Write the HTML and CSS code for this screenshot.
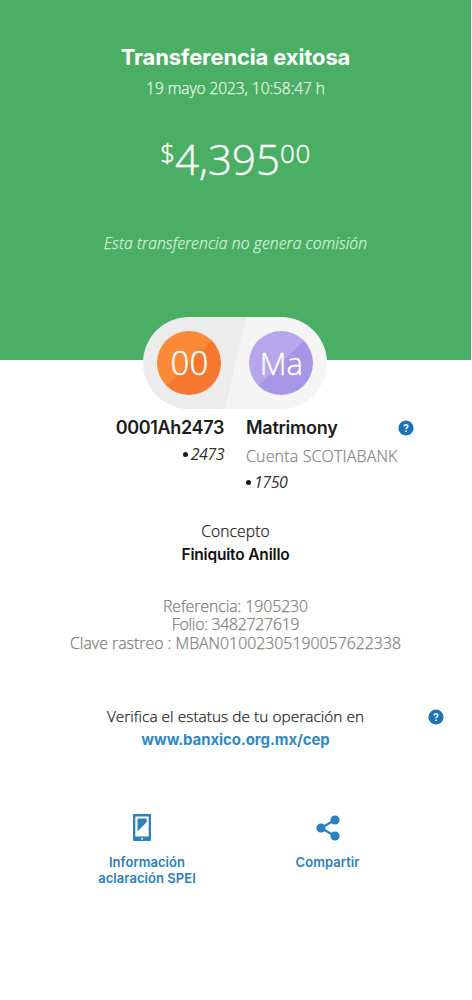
FILE: index.html
```html
<!DOCTYPE html>
<html lang="es">
<head>
<meta charset="utf-8">
<title>Transferencia exitosa</title>
<link rel="stylesheet" href="styles.css">
</head>
<body>
<main class="receipt">
  <header class="hero">
    <h1 class="title">Transferencia exitosa</h1>
    <p class="date">19 mayo 2023, 10:58:47 h</p>
    <p class="amount"><span class="currency">$</span><span class="units">4,395</span><span class="cents">00</span></p>
    <p class="fee">Esta transferencia no genera comisión</p>
  </header>

  <section class="pill">
    <div class="avatar avatar-from"><span>00</span></div>
    <div class="avatar avatar-to"><span>Ma</span></div>
  </section>

  <section class="parties">
    <div class="party party-from">
      <h2 class="name name-from">0001Ah2473</h2>
      <p class="account"><i class="dot"></i>2473</p>
    </div>
    <div class="party party-to">
      <h2 class="name name-to">Matrimony</h2>
      <p class="bank">Cuenta SCOTIABANK</p>
      <p class="account"><i class="dot"></i>1750</p>
    </div>
    <svg class="help" viewBox="0 0 16 16"><circle cx="8" cy="8" r="7.6" fill="#1c72b4"/><path d="M6.2 6.4C6.2 4.1 9.9 4.1 9.9 6.3C9.9 7.7 8.1 7.6 8.1 9.2M8.1 10.4v1.5" fill="none" stroke="#fff" stroke-width="1.5"/></svg>
  </section>

  <section class="concept">
    <p class="concept-label">Concepto</p>
    <p class="concept-value">Finiquito Anillo</p>
  </section>

  <section class="details">
    <p class="reference">Referencia: 1905230</p>
    <p class="folio">Folio: 3482727619</p>
    <p class="tracking">Clave rastreo : MBAN01002305190057622338</p>
  </section>

  <section class="verify">
    <div class="verify-text">
      <p class="verify-label">Verifica el estatus de tu operación en</p>
      <a class="verify-link">www.banxico.org.mx/cep</a>
    </div>
    <svg class="help" viewBox="0 0 16 16"><circle cx="8" cy="8" r="7.6" fill="#1c72b4"/><path d="M6.2 6.4C6.2 4.1 9.9 4.1 9.9 6.3C9.9 7.7 8.1 7.6 8.1 9.2M8.1 10.4v1.5" fill="none" stroke="#fff" stroke-width="1.5"/></svg>
  </section>

  <nav class="actions">
    <div class="action action-info">
      <svg class="phone" viewBox="0 0 18 27"><path fill="#2b80be" fill-rule="evenodd" d="M1 0h16Q18 0 18 1v25Q18 27 17 27H1Q0 27 0 26V1Q0 0 1 0ZM2.3 2.5v20h13.4v-20Z"/><path fill="#2b80be" d="M4.5 4.500H13.700V8L4.500 17.500Z"/><circle cx="9" cy="24.800" r="1" fill="#fff"/></svg>
      <span class="action-label">Información<br>aclaración SPEI</span>
    </div>
    <div class="action action-share">
      <svg class="share" viewBox="0 0 24 26"><path d="M19 5L5 13L19 21" fill="none" stroke="#2b80be" stroke-width="2.300"/><g fill="#2b80be"><circle cx="19" cy="5" r="4.600"/><circle cx="5" cy="13" r="4.600"/><circle cx="19" cy="21" r="4.600"/></g></svg>
      <span class="action-label">Compartir</span>
    </div>
  </nav>
</main>
</body>
</html>
```
FILE: styles.css
```css
* { box-sizing: border-box; }
body { margin: 0; background: #fff; }
h1, h2, p { margin: 0; }

.receipt {
  width: 471px;
  min-height: 1000px;
  font-family: "Open Sans", "Noto Sans", sans-serif;
  font-weight: 300;
  font-size: 16px;
  text-align: center;
  color: #222;
  white-space: nowrap;
}
.date, .fee, .bank, .concept-label, .details, .verify-label { -webkit-text-stroke: 0.25px currentColor; }
.amount, .avatar { -webkit-text-stroke: 0.45px currentColor; }

/* Green header */
.hero { height: 360px; padding-top: 42px; background: #4aaf64; color: #fff; }
.title { font: 700 22px/30px "Inter", sans-serif; letter-spacing: -0.13px; }
.date { margin-top: 5px; font-size: 15.5px; line-height: 22px; letter-spacing: -0.06px; color: #e9f9ec; }
.amount { display: flex; justify-content: center; align-items: flex-start; margin-top: 30px; height: 60px; }
.currency { font-size: 26px; line-height: 47px; }
.units { font-size: 42px; line-height: 60px; }
.cents { font-size: 26px; line-height: 49px; letter-spacing: 0.6px; }
.fee { margin-top: 43px; font-size: 15.7px; line-height: 22px; letter-spacing: 0.1px; font-style: italic; color: #d5f3dc; }

/* Sender and recipient badges */
.pill {
  position: relative;
  display: flex;
  justify-content: space-between;
  align-items: center;
  width: 184px;
  height: 92px;
  margin: -43px 0 0 143.4px;
  padding: 0 14px;
  border-radius: 46px;
  background: linear-gradient(103deg, #ebeceb 50%, #f5f5f6 50.6%);
}
.avatar {
  display: grid;
  place-items: center;
  width: 64px;
  height: 64px;
  border-radius: 50%;
  font-size: 31px;
  line-height: 64px;
  color: #fff;
}
.avatar-from { background: linear-gradient(135deg, #fa8938 50%, #f67830 50.8%); }
.avatar-from span { font-size: 33px; }
.avatar-to { background: linear-gradient(135deg, #b6a6ea 50%, #a795e6 50.8%); }

.parties {
  display: grid;
  grid-template-columns: 224px 152px 16px;
  column-gap: 22px;
  padding-top: 6px;
  height: 89px;
}
.parties .help { margin: 5px 0 0 -22px; }
.party-from { text-align: right; }
.party-to { text-align: left; }
.name { font: 600 18px/26px "Inter", sans-serif; color: #1c1c1c; }
.name-from { letter-spacing: -0.35px; }
.name-to { letter-spacing: -0.25px; }
.account { font-size: 16px; line-height: 26px; font-style: italic; font-weight: 400; letter-spacing: -0.5px; color: #333; }
.dot { display: inline-block; width: 5px; height: 5px; margin-right: 3px; border-radius: 50%; background: #1a1a1a; vertical-align: 3px; }
.bank { line-height: 28px; margin-top: 1px; letter-spacing: 0.15px; color: #858585; }
.party-to .account { margin-top: -1px; }
.help { width: 16px; height: 16px; }

.concept { margin-top: 22px; line-height: 23px; }
.concept-label { font-size: 15.6px; letter-spacing: 0.1px; color: #222; }
.concept-value { font: 600 15.5px/24px "Inter", sans-serif; letter-spacing: -0.18px; color: #111; }

.details { margin-top: 30px; font-size: 15.8px; line-height: 18.4px; color: #7d7d7d; }
.reference { letter-spacing: -0.05px; }
.folio { letter-spacing: -0.25px; }
.tracking { letter-spacing: 0.03px; }

.verify { display: grid; grid-template-columns: 1fr auto; margin: 52.8px 27px 0 0; }
.verify-text { padding-left: 43px; }
.verify-label { font-size: 15.4px; line-height: 23px; letter-spacing: 0.04px; color: #222; }
.verify-link { display: block; font: 700 15px/23px "Inter", sans-serif; letter-spacing: -0.1px; color: #3089c3; }
.verify .help { margin-top: 4px; }

.actions { display: grid; grid-template-columns: 98px 66px; column-gap: 98.5px; margin: 63px 0 0 98px; }
.action { display: flex; flex-direction: column; align-items: center; }
.phone { width: 18px; height: 27px; margin-right: 11px; }
.share { width: 24px; height: 26px; margin-top: 1px; }
.action-label { margin-top: 13px; font: 600 13px/16px "Inter", sans-serif; letter-spacing: 0.05px; color: #2d7eb9; }
```
